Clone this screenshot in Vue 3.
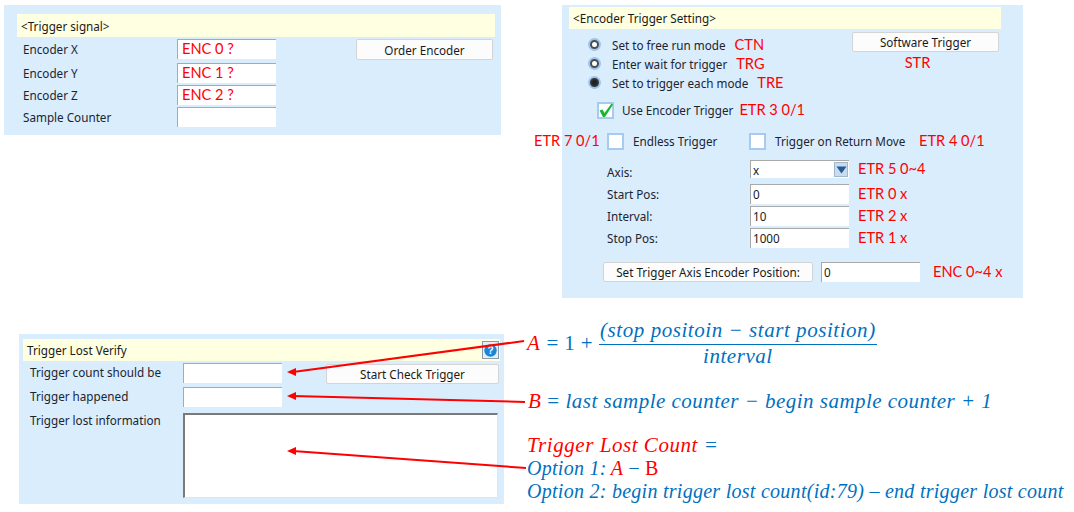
<template>
  <div class="page">
    <div class="top-row">
      <section class="panel signal-panel">
        <div class="panel-head">&lt;Trigger signal&gt;</div>
        <div class="signal-body">
          <div class="signal-fields">
            <div v-for="row in signalRows" :key="row.label" class="signal-row" :style="{ height: row.height + 'px' }">
              <span class="label">{{ row.label }}</span>
              <div class="field signal-field red-text">{{ row.value }}</div>
            </div>
          </div>
          <button class="btn order-btn">Order Encoder</button>
        </div>
      </section>

      <section class="panel encoder-panel">
        <div class="panel-head">&lt;Encoder Trigger Setting&gt;</div>

        <div class="mode-block">
          <div class="modes">
            <div v-for="mode in modes" :key="mode.text" class="mode-row">
              <span class="radio" :class="{ on: mode.on }"></span>
              <span class="label">{{ mode.text }}</span>
              <span class="red-text">{{ mode.code }}</span>
            </div>
          </div>
          <div class="soft-col">
            <button class="btn soft-btn">Software Trigger</button>
            <span class="red-text">STR</span>
          </div>
        </div>

        <div class="check-row use-row">
          <span class="check">
            <svg width="17" height="17" viewBox="0 0 17 17">
              <path d="M2.5 8.5 L5.5 7.5 L7.5 11 L14.5 1.5 L16 2.5 L8 15 L6 15 Z" fill="#16b82e" />
            </svg>
          </span>
          <span class="label">Use Encoder Trigger</span>
          <span class="red-text">ETR 3 0/1</span>
        </div>

        <div class="check-row endless-row">
          <span class="red-text etr7">ETR 7 0/1</span>
          <span class="check"></span>
          <span class="label endless-label">Endless Trigger</span>
          <span class="check"></span>
          <span class="label return-label">Trigger on Return Move</span>
          <span class="red-text">ETR 4 0/1</span>
        </div>

        <div class="axis-form">
          <div v-for="row in axisRows" :key="row.label" class="axis-row" :class="{ 'is-select': row.select }">
            <span class="label">{{ row.label }}</span>
            <div class="field axis-field" :class="{ 'select-field': row.select }">
              {{ row.value }}
              <span v-if="row.select" class="drop">
                <svg width="11" height="8" viewBox="0 0 11 8"><path d="M0.5 0.5 H10.5 L5.5 7.5 Z" fill="#2a5a94" /></svg>
              </span>
            </div>
            <span class="red-text">{{ row.code }}</span>
          </div>
        </div>

        <div class="encoder-pos">
          <button class="btn pos-btn">Set Trigger Axis Encoder Position:</button>
          <div class="field pos-field">0</div>
          <span class="red-text">ENC 0~4 x</span>
        </div>
      </section>
    </div>

    <div class="bottom-row">
      <section class="panel lost-panel">
        <div class="panel-head lost-head">
          <span>Trigger Lost Verify</span>
          <span class="help">
            <svg width="13" height="13" viewBox="0 0 13 13">
              <circle cx="6.5" cy="6.5" r="6.2" fill="#1b86d8" />
              <text x="6.5" y="10" text-anchor="middle" class="help-mark">?</text>
            </svg>
          </span>
        </div>
        <div class="lost-grid">
          <span class="label">Trigger count should be</span>
          <div class="field lost-field"></div>
          <button class="btn check-btn">Start Check Trigger</button>
          <span class="label">Trigger happened</span>
          <div class="field lost-field"></div>
          <span></span>
          <span class="label lost-info">Trigger lost information</span>
          <div class="field lost-area"></div>
        </div>
      </section>

      <div class="notes">
        <div class="formula formula-a">
          <span class="red-math">A</span>
          <span class="eq">= 1 +</span>
          <span class="fraction">
            <span class="numer">(stop positoin − start position)</span>
            <span class="denom">interval</span>
          </span>
        </div>
        <div class="formula formula-b">
          <span class="red-math">B</span>
          <span class="eq">=</span>
          <span>last sample counter − begin sample counter + 1</span>
        </div>
        <div class="lost-title"><span class="red-math">Trigger Lost Count</span> =</div>
        <div class="option option-one"><span>Option 1:</span><span class="red-math">A</span><span>−</span><span class="red-plain">B</span></div>
        <div class="option">Option 2: begin trigger lost count(id:79) – end trigger lost count</div>
      </div>
    </div>

    <!-- callout arrows lie over the panels -->
    <svg class="arrows" width="1074" height="512" viewBox="0 0 1074 512">
      <g v-for="a in arrows" :key="a.x2 + a.y2">
        <line :x1="a.x1" :y1="a.y1" :x2="a.x2 + 6" :y2="a.y2" stroke="#f00" stroke-width="2" />
        <path :d="`M${a.x2} ${a.y2} L${a.x2 + 9} ${a.y2 - 4} L${a.x2 + 9} ${a.y2 + 4} Z`" fill="#f00" />
      </g>
    </svg>
  </div>
</template>

<script setup>
const signalRows = [
  { label: 'Encoder X', value: 'ENC 0 ?', height: 24 },
  { label: 'Encoder Y', value: 'ENC 1 ?', height: 22 },
  { label: 'Encoder Z', value: 'ENC 2 ?', height: 22 },
  { label: 'Sample Counter', value: '', height: 21 }
]

const modes = [
  { text: 'Set to free run mode', code: 'CTN', on: false },
  { text: 'Enter wait for trigger', code: 'TRG', on: false },
  { text: 'Set to trigger each mode', code: 'TRE', on: true }
]

const axisRows = [
  { label: 'Axis:', value: 'x', code: 'ETR 5 0~4', select: true },
  { label: 'Start Pos:', value: '0', code: 'ETR 0 x' },
  { label: 'Interval:', value: '10', code: 'ETR 2 x' },
  { label: 'Stop Pos:', value: '1000', code: 'ETR 1 x' }
]

const arrows = [
  { x1: 524, y1: 341, x2: 287, y2: 372 },
  { x1: 525, y1: 402, x2: 287, y2: 396 },
  { x1: 526, y1: 468, x2: 287, y2: 451 }
]
</script>

<style>
html,
body {
  margin: 0;
  background: #fff;
}
</style>

<style scoped>
.page {
  position: relative;
  width: 1074px;
  height: 512px;
  overflow: hidden;
  background: #fff;
  font-family: "Noto Sans", "Open Sans", sans-serif;
  font-size: 11.7px;
  color: #1a1a1a;
}

.top-row {
  display: flex;
  align-items: flex-start;
  gap: 61px;
  height: 298px;
  padding: 5px 0 0 4px;
  box-sizing: border-box;
}

.bottom-row {
  display: flex;
  align-items: flex-start;
  padding-left: 19px;
}

.panel {
  flex: none;
  background: #d9edfd;
  box-sizing: border-box;
}

.panel-head {
  display: flex;
  align-items: center;
  background: #ffffe1;
  padding-left: 4px;
  height: 23px;
  box-sizing: border-box;
}

.label {
  white-space: nowrap;
  color: #1c2430;
}

.red-text {
  font-family: Lato, "Noto Sans", sans-serif;
  font-size: 14.6px;
  line-height: 18px;
  color: #f00;
  white-space: nowrap;
}

.field {
  box-sizing: border-box;
  background: #fff;
  border-top: 1px solid #a9a9a9;
  border-left: 1px solid #a9a9a9;
  white-space: nowrap;
}

.btn {
  flex: none;
  box-sizing: border-box;
  height: 21px;
  padding: 0;
  border: 1px solid #d4d4d4;
  border-radius: 2px;
  background: #fcfcfc;
  font: inherit;
  color: #1a1a1a;
}

/* trigger signal */
.signal-panel {
  width: 497px;
  height: 130px;
  padding: 9px 6px 0 13px;
}

.signal-body {
  display: flex;
  align-items: flex-start;
  justify-content: space-between;
  padding: 2px 2px 0 6px;
}

.signal-row {
  display: grid;
  grid-template-columns: 154px 99px;
  align-items: start;
}

.signal-row .label {
  line-height: 20px;
}

.signal-field {
  height: 20px;
  padding-left: 4px;
}

.order-btn {
  width: 137px;
}

/* encoder trigger */
.encoder-panel {
  width: 461px;
  height: 293px;
  padding: 2px 22px 0 7px;
}

.encoder-panel .panel-head {
  height: 22px;
  margin-bottom: 3px;
}

.mode-block {
  display: flex;
  justify-content: space-between;
  padding-right: 2px;
}

.modes {
  padding: 3px 0 0 21px;
}

.mode-row {
  display: flex;
  align-items: center;
  height: 19px;
}

.mode-row .label {
  margin-left: 13px;
  margin-right: 9px;
}

.radio {
  box-sizing: border-box;
  width: 9px;
  height: 9px;
  border: 2px solid #4d4d4d;
  border-radius: 50%;
  background: #fff;
  box-shadow: 0 0 0 2px #9cc4ee;
}

.radio.on {
  background: #222;
  border-color: #333;
}

.soft-col {
  display: flex;
  flex-direction: column;
  align-items: center;
}

.soft-btn {
  width: 147px;
  height: 20px;
  margin-bottom: 2px;
}

.soft-col .red-text {
  margin-right: 16px;
}

.check-row {
  display: flex;
  align-items: center;
}

.check {
  display: flex;
  align-items: center;
  justify-content: center;
  flex: none;
  box-sizing: border-box;
  width: 17px;
  height: 17px;
  background: #fff;
  border: 2px solid #a6cbef;
}

.check svg {
  flex: none;
  margin: -2px;
}

.use-row {
  margin-top: 9px;
  padding-left: 28px;
}

.use-row .label {
  margin: 0 6px 0 8px;
}

.endless-row {
  margin-top: 13px;
  margin-left: -35px;
}

.etr7 {
  width: 73px;
}

.endless-label {
  width: 116px;
  margin-left: 9px;
}

.return-label {
  width: 144px;
  margin-left: 9px;
}

.axis-form {
  margin-top: 10px;
  padding-left: 38px;
}

.axis-row {
  display: grid;
  grid-template-columns: 143px 99px auto;
  align-items: center;
  height: 22px;
}

.axis-row.is-select {
  height: 23px;
}

.is-select .field,
.is-select .red-text {
  align-self: start;
}

.axis-row .red-text {
  margin-left: 9px;
}

.axis-field {
  height: 20px;
  padding-left: 2px;
  line-height: 18px;
}

.select-field {
  display: flex;
  align-items: center;
  justify-content: space-between;
  height: 18px;
  padding-right: 1px;
}

.drop {
  display: flex;
  align-items: center;
  justify-content: center;
  width: 14px;
  height: 15px;
  background: #c6dcef;
  border: 1px solid #9fb8cf;
  box-sizing: border-box;
}

.encoder-pos {
  display: flex;
  align-items: center;
  margin-top: 13px;
  padding-left: 34px;
}

.pos-btn {
  width: 210px;
  height: 20px;
}

.pos-field {
  flex: none;
  width: 99px;
  height: 20px;
  margin-left: 8px;
  padding-left: 2px;
  line-height: 18px;
}

.encoder-pos .red-text {
  margin-left: 13px;
}

/* trigger lost verify */
.lost-panel {
  width: 485px;
  height: 170px;
  margin-top: 36px;
  padding: 5px 4px 0 4px;
}

.lost-head {
  justify-content: space-between;
  height: 22px;
  padding-right: 1px;
}

.help {
  display: flex;
  align-items: center;
  justify-content: center;
  box-sizing: border-box;
  width: 17px;
  height: 18px;
  border: 1px solid #8c99a8;
  background: #e8eef4;
}

.help-mark {
  font-family: "Liberation Sans", sans-serif;
  font-size: 10px;
  font-weight: 700;
  fill: #fff;
}

.lost-grid {
  display: grid;
  grid-template-columns: 153px 99px auto;
  grid-template-rows: 24px 26px auto;
  padding: 2px 0 0 7px;
}

.lost-grid .label {
  line-height: 18px;
}

.lost-grid .lost-info {
  margin-top: -2px;
}

.lost-field {
  height: 20px;
}

.lost-area {
  grid-column: 2 / 4;
  box-sizing: border-box;
  width: 315px;
  height: 85px;
  border: 1px solid #e4e4e4;
  border-top: 2px solid #7a7a7a;
  border-left: 2px solid #7a7a7a;
}

.check-btn {
  width: 173px;
  height: 20px;
  margin: 1px 0 0 44px;
}

/* formulas */
.notes {
  margin-left: 23px;
  margin-top: 18px;
  font-family: "Liberation Serif", serif;
  font-style: italic;
  font-size: 21px;
  letter-spacing: 0.55px;
  color: #0070c0;
  white-space: nowrap;
}

.formula {
  display: flex;
  align-items: center;
  gap: 6px;
}

.formula-a {
  height: 54px;
}

.fraction {
  display: flex;
  flex-direction: column;
  align-items: center;
}

.numer {
  padding: 0 1px 1px;
  border-bottom: 1px solid #0070c0;
}

.denom {
  margin-top: -1px;
}

.eq {
  font-style: normal;
  letter-spacing: 0.4px;
}

.formula-b {
  margin-top: 19px;
  height: 24px;
  padding-left: 1px;
  letter-spacing: 0.47px;
}

.red-math {
  color: #f00;
}

.red-plain {
  color: #f00;
  font-style: normal;
}

.lost-title {
  margin-top: 21px;
  line-height: 23px;
}

.option {
  font-size: 20px;
  letter-spacing: 0.27px;
  line-height: 23px;
}

.option-one {
  display: flex;
  gap: 4px;
}

.arrows {
  position: absolute;
  left: 0;
  top: 0;
  pointer-events: none;
}
</style>
